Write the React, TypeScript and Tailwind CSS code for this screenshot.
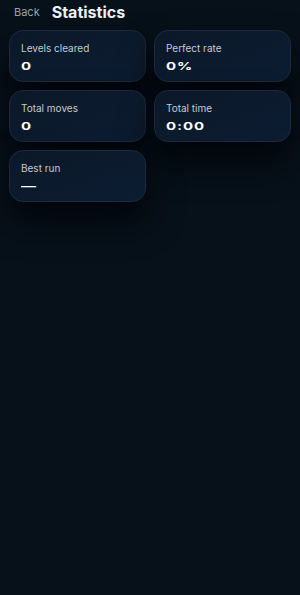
const stats = [
  { label: "Levels cleared", value: "0" },
  { label: "Perfect rate", value: "0%" },
  { label: "Total moves", value: "0" },
  { label: "Total time", value: "0:00" },
  { label: "Best run", value: "—" },
];

function StatCard({ label, value }: { label: string; value: string }) {
  return (
    <div className="h-[52px] rounded-[14px] border border-[#1c2a3b] bg-gradient-to-br from-[#0b1829] to-[#0c1c31] px-[11px] pt-[11px] shadow-[0_20px_34px_rgba(0,3,8,0.85)]">
      <div className="text-[10px] leading-[12px] text-[#c3cad3]">{label}</div>
      <div className="mt-[5px] origin-left scale-y-[0.72] text-[15px] font-bold leading-[14px] tracking-[0.06em] text-white">
        {value}
      </div>
    </div>
  );
}

export default function App() {
  return (
    <div
      className="min-h-[595px] w-[300px] bg-[#07111a]"
      style={{ fontFamily: "Inter, 'Noto Sans', sans-serif" }}
    >
      <div className="flex items-end gap-[12px] px-[14px] pt-[2px]">
        <button className="pb-[3px] text-[11px] leading-[13px] text-[#9aa3ae]">Back</button>
        <h1 className="text-[16px] font-bold leading-[20px] text-[#eef1f5]">Statistics</h1>
      </div>
      <div className="mt-[8px] grid grid-cols-2 gap-x-[8px] gap-y-[8px] px-[9px]">
        {stats.map((s) => (
          <StatCard key={s.label} label={s.label} value={s.value} />
        ))}
      </div>
    </div>
  );
}
